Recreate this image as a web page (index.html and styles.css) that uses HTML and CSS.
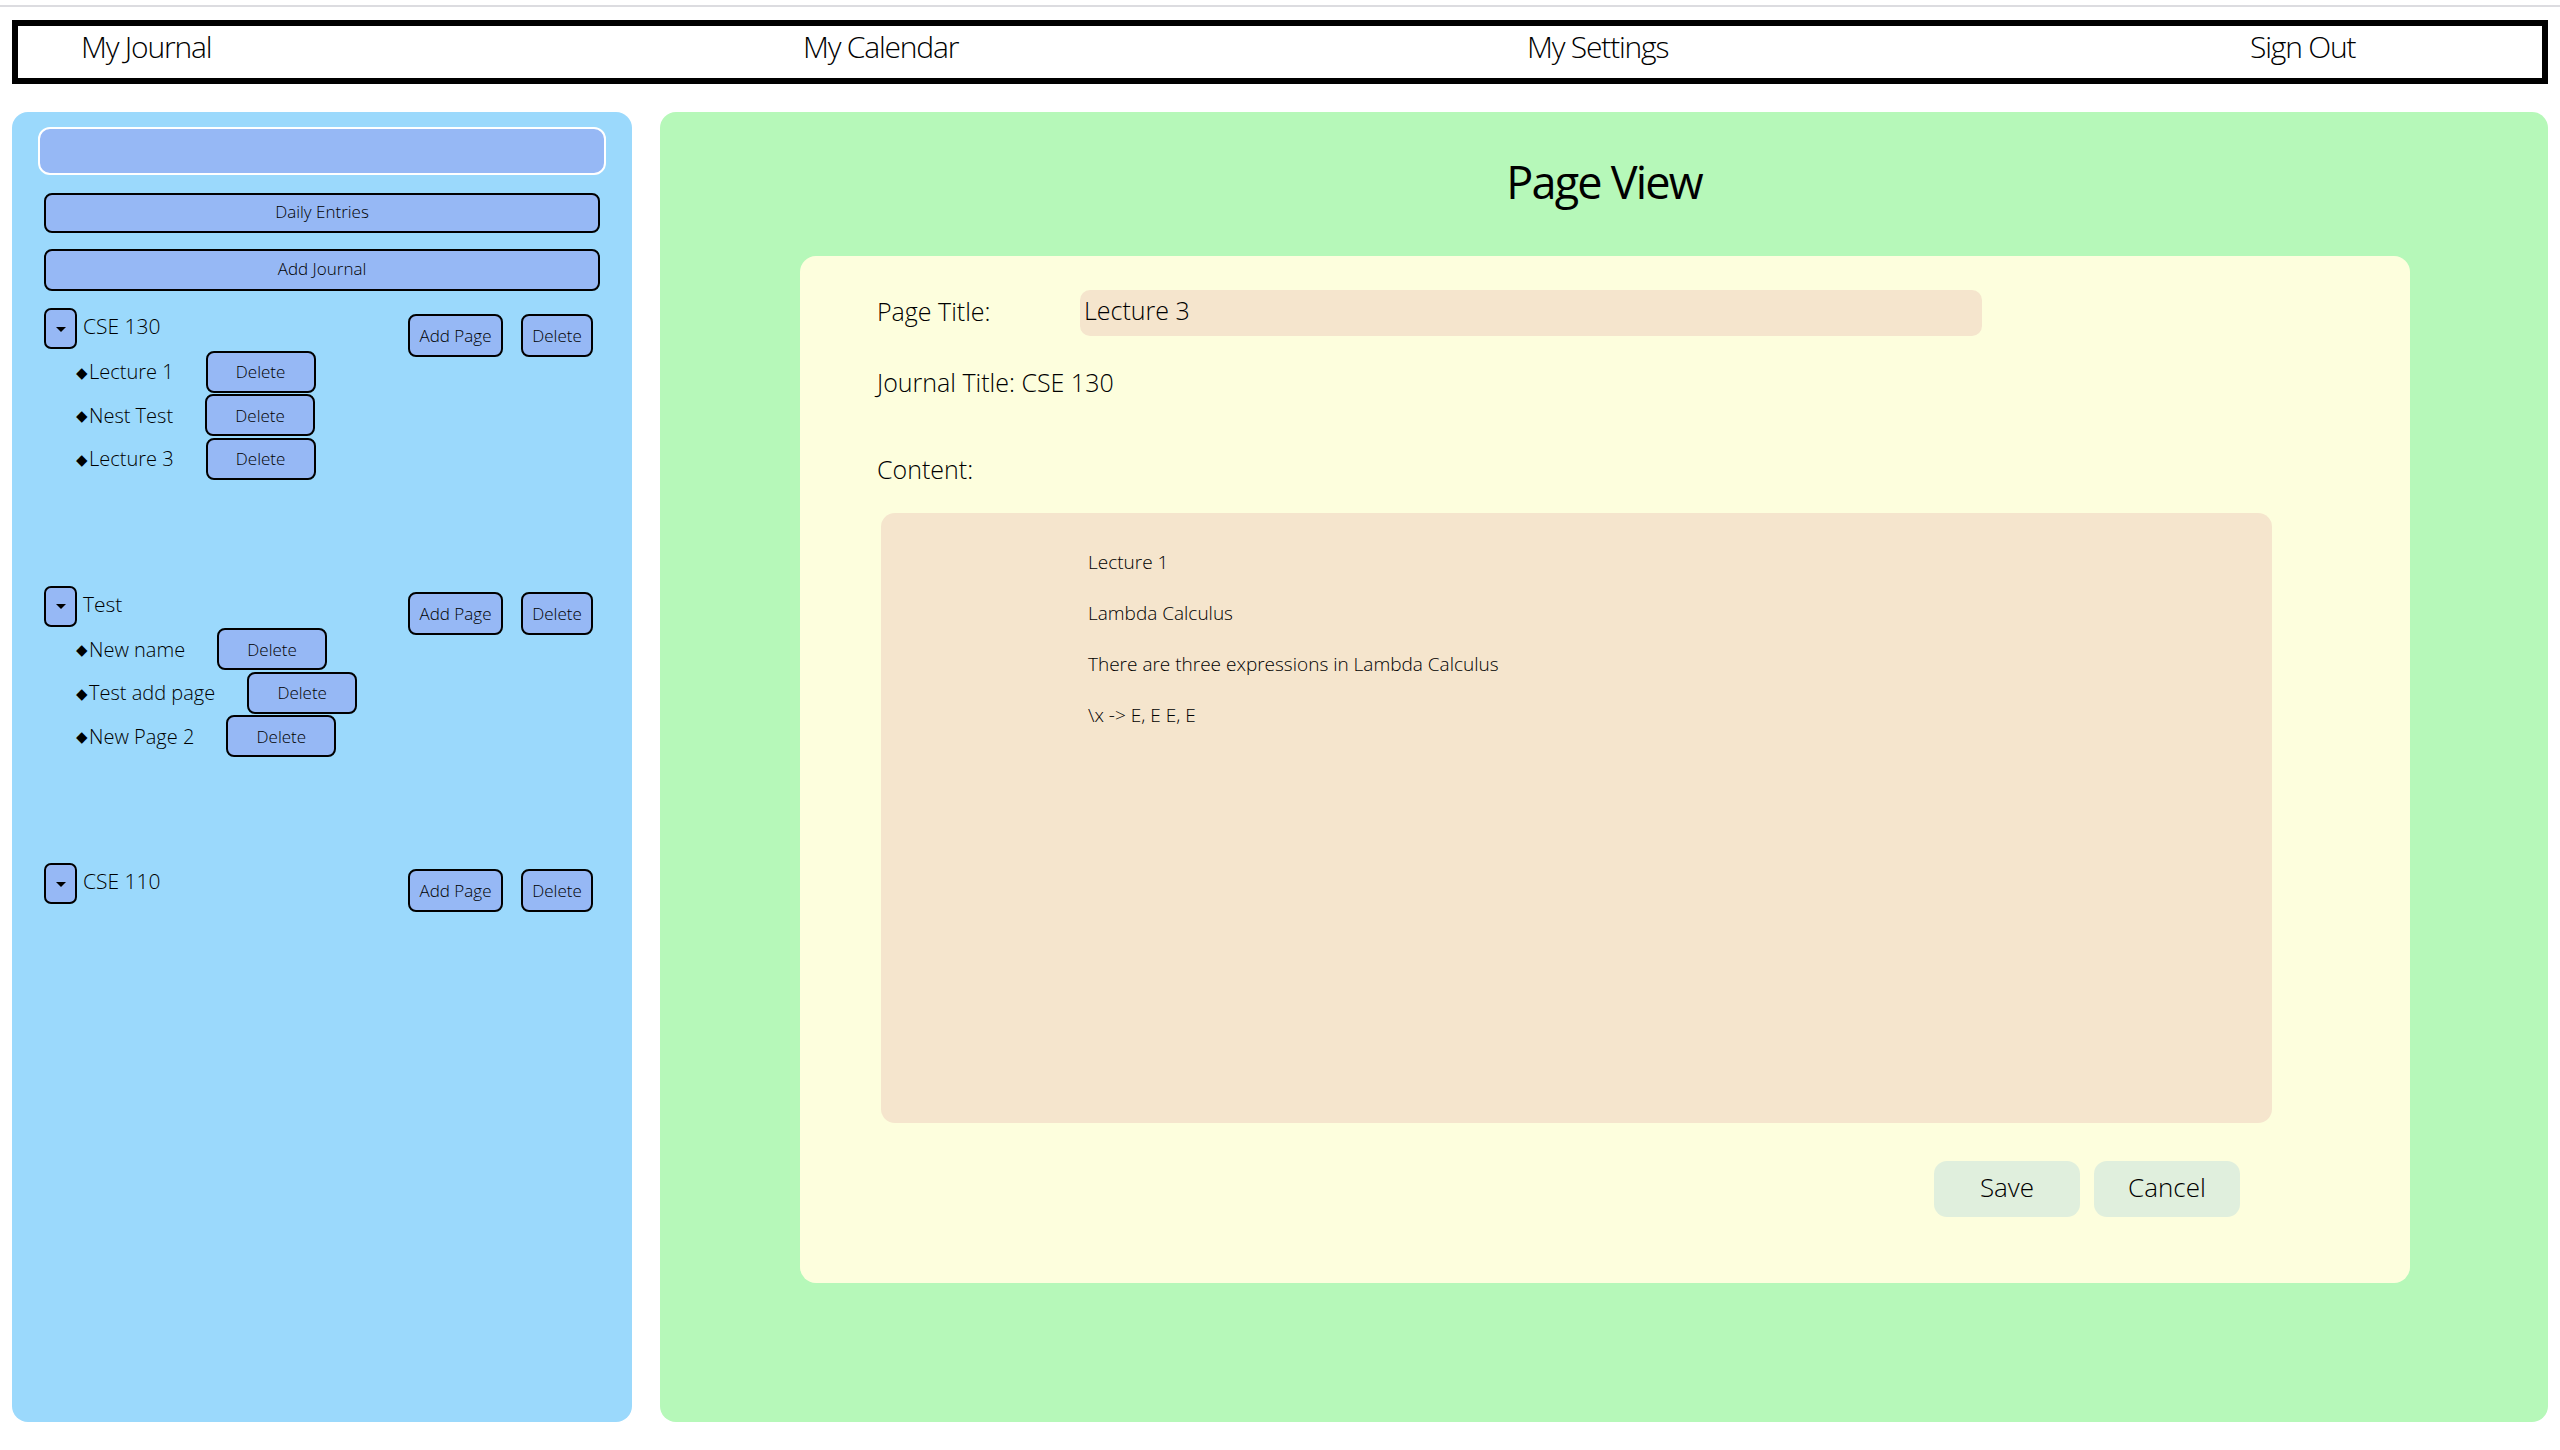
FILE: index.html
```html
<!DOCTYPE html>
<html lang="en">
<head>
<meta charset="utf-8">
<title>Page View</title>
<link rel="stylesheet" href="styles.css">
</head>
<body>
<div class="topline"></div>
<nav class="nav">
  <a class="nav-item">My Journal</a>
  <a class="nav-item">My Calendar</a>
  <a class="nav-item">My Settings</a>
  <a class="nav-item">Sign Out</a>
</nav>
<div class="layout">
  <aside class="sidebar">
    <input class="search" type="text">
    <button class="side-btn">Daily Entries</button>
    <button class="side-btn side-btn-2">Add Journal</button>

    <div class="group">
      <div class="group-head">
        <button class="toggle"><span class="tri"></span></button>
        <span class="group-title">CSE 130</span>
        <div class="group-actions">
          <button class="sbtn add">Add Page</button>
          <button class="sbtn del">Delete</button>
        </div>
      </div>
      <div class="item"><span class="dia">◆</span>Lecture 1<button class="sbtn idel">Delete</button></div>
      <div class="item"><span class="dia">◆</span>Nest Test<button class="sbtn idel">Delete</button></div>
      <div class="item"><span class="dia">◆</span>Lecture 3<button class="sbtn idel">Delete</button></div>
    </div>

    <div class="group">
      <div class="group-head">
        <button class="toggle"><span class="tri"></span></button>
        <span class="group-title">Test</span>
        <div class="group-actions">
          <button class="sbtn add">Add Page</button>
          <button class="sbtn del">Delete</button>
        </div>
      </div>
      <div class="item"><span class="dia">◆</span>New name<button class="sbtn idel">Delete</button></div>
      <div class="item"><span class="dia">◆</span>Test add page<button class="sbtn idel">Delete</button></div>
      <div class="item"><span class="dia">◆</span>New Page 2<button class="sbtn idel">Delete</button></div>
    </div>

    <div class="group">
      <div class="group-head">
        <button class="toggle"><span class="tri"></span></button>
        <span class="group-title">CSE 110</span>
        <div class="group-actions">
          <button class="sbtn add">Add Page</button>
          <button class="sbtn del">Delete</button>
        </div>
      </div>
    </div>
  </aside>

  <main class="main">
    <h1 class="title">Page View</h1>
    <section class="card">
      <div class="title-row">
        <label class="label">Page Title:</label>
        <div class="title-input">Lecture 3</div>
      </div>
      <div class="journal">Journal Title: CSE 130</div>
      <div class="content-label">Content:</div>
      <div class="content">
        <p>Lecture 1</p>
        <p>Lambda Calculus</p>
        <p>There are three expressions in Lambda Calculus</p>
        <p>\x -&gt; E, E E, E</p>
      </div>
      <div class="actions">
        <button class="act">Save</button>
        <button class="act">Cancel</button>
      </div>
    </section>
  </main>
</div>
</body>
</html>
```
FILE: styles.css
```css
* { box-sizing: border-box; }
html, body {
  margin: 0;
  padding: 0;
  background: #ffffff;
  width: 2560px;
  height: 1450px;
  overflow: hidden;
}
body {
  font-family: "Open Sans", "Noto Sans", sans-serif;
  font-weight: 350;
  color: #000;
}
button, input {
  font-family: inherit;
  font-weight: inherit;
  color: #000;
}

.topline {
  margin-top: 5px;
  height: 2px;
  background: #dcdce0;
}

.nav {
  margin: 13px 12px 0 12px;
  height: 64px;
  border: 6px solid #000;
  display: grid;
  grid-template-columns: 722px 724px 723px 1fr;
  padding-left: 63px;
  font-size: 30px;
  letter-spacing: -1.2px;
  line-height: 41px;
}
.nav-item { white-space: nowrap; }

.layout {
  display: flex;
  gap: 28px;
  padding: 28px 12px;
  height: 1366px;
}

.sidebar {
  width: 620px;
  flex: none;
  background: #9bd9fc;
  border-radius: 16px;
  padding: 15px 32px;
  display: flex;
  flex-direction: column;
}
.search {
  height: 48px;
  margin: 0 -6px;
  border: 2px solid #ffffff;
  border-radius: 12px;
  background: #96b8f5;
}
.side-btn {
  margin-top: 18px;
  height: 40px;
  border: 2px solid #000;
  border-radius: 8px;
  background: #96b8f5;
  font-size: 17px;
  padding: 0 0 3px 0;
}
.side-btn-2 { margin-top: 16px; height: 42px; }

.group { margin-top: 17px; margin-bottom: 88px; }
.group-head {
  height: 42px;
  display: flex;
  align-items: flex-start;
}
.toggle {
  width: 33px;
  height: 41px;
  border: 2px solid #000;
  border-radius: 7px;
  background: #96b8f5;
  padding: 0;
  display: flex;
  align-items: center;
  justify-content: center;
  flex: none;
}
.tri {
  width: 0;
  height: 0;
  border-left: 5.5px solid transparent;
  border-right: 5.5px solid transparent;
  border-top: 5px solid #000;
  margin-top: 1px;
}
.group-title {
  font-size: 21px;
  margin-left: 6px;
  line-height: 36px;
}
.group-actions {
  margin-left: auto;
  margin-right: 7px;
  margin-top: 6px;
  display: flex;
  gap: 18px;
}
.sbtn {
  height: 43px;
  border: 2px solid #000;
  border-radius: 8px;
  background: #96b8f5;
  font-size: 17px;
  padding: 0;
}
.add { width: 95px; }
.del { width: 72px; }

.item {
  height: 43.5px;
  display: flex;
  align-items: center;
  padding-left: 32px;
  font-size: 20px;
}
.dia { font-size: 15px; margin-right: 1px; }
.idel {
  margin-left: 32px;
  width: 110px;
  height: 42px;
}

.main {
  flex: 1;
  background: #b6f8b9;
  border-radius: 16px;
  padding-top: 38px;
}
.title {
  margin: 0 0 43px 0;
  text-align: center;
  font-size: 45px;
  font-weight: 400;
  letter-spacing: -1.8px;
  line-height: 63px;
}
.card {
  width: 1610px;
  margin-left: 140px;
  background: #fdfedd;
  border-radius: 16px;
  padding: 34px 0 66px 77px;
  font-size: 25px;
}
.title-row {
  display: flex;
  align-items: center;
  height: 46px;
}
.label {
  width: 203px;
  font-size: 25px;
  margin-bottom: 5px;
}
.title-input {
  width: 902px;
  height: 46px;
  background: #f5e5cd;
  border-radius: 10px;
  padding-left: 4px;
  font-size: 25px;
  line-height: 40px;
}
.journal { margin-top: 30px; line-height: 33px; }
.content-label { margin-top: 54px; line-height: 33px; }
.content {
  margin: 27px 0 0 4px;
  width: 1391px;
  height: 610px;
  background: #f5e5cd;
  border-radius: 14px;
  padding: 14px 0 0 207px;
  font-size: 19px;
  line-height: 31px;
  overflow: hidden;
}
.content p { margin: 20px 0; }
.actions {
  width: 1395px;
  margin-top: 38px;
  padding-right: 32px;
  display: flex;
  justify-content: flex-end;
  gap: 14px;
}
.act {
  width: 146px;
  height: 56px;
  border: none;
  border-radius: 13px;
  background: #e0efdd;
  font-size: 26px;
  padding: 0 0 5px 0;
}
```
